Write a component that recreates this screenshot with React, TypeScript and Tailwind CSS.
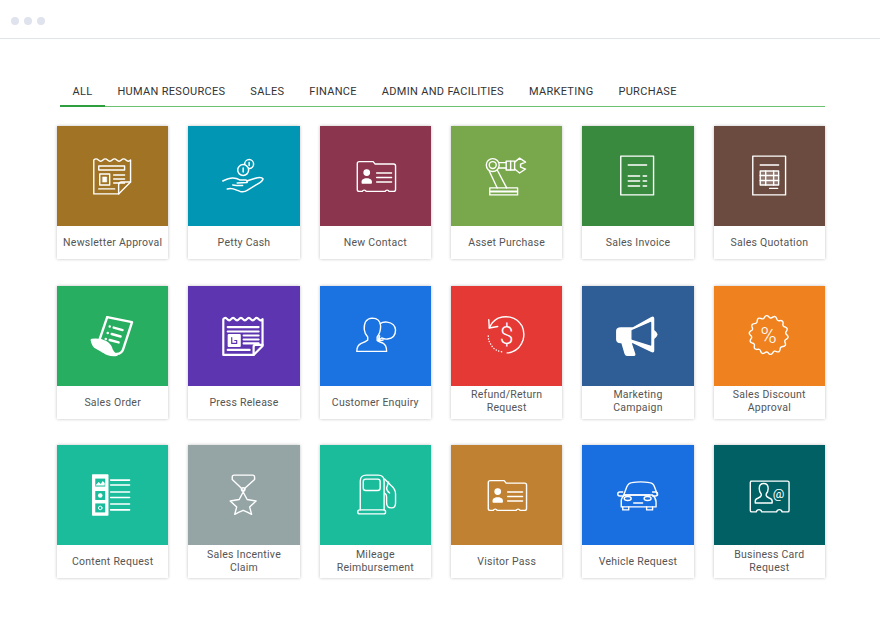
import type { ReactNode } from "react";

const tabs = ["ALL", "HUMAN RESOURCES", "SALES", "FINANCE", "ADMIN AND FACILITIES", "MARKETING", "PURCHASE"];

// zigzag along the top of the newspaper icons
function wave(x1: number, x2: number, y: number, n: number) {
  const step = (x2 - x1) / n;
  let d = `M${x1} ${y}`;
  for (let i = 0; i < n; i++) {
    d += ` q${step / 2} ${i % 2 ? 2.4 : -2.4} ${step} 0`;
  }
  return d;
}

function badgePath(cx: number, cy: number, r: number, n: number) {
  const pt = (a: number, rr: number) => `${(cx + rr * Math.cos(a)).toFixed(1)} ${(cy + rr * Math.sin(a)).toFixed(1)}`;
  let d = `M${pt(0, r)} `;
  for (let i = 0; i < n; i++) {
    const a = (i * 2 * Math.PI) / n;
    const b = ((i + 1) * 2 * Math.PI) / n;
    d += `Q${pt((a + b) / 2, i % 2 ? r - 2.4 : r + 2.4)} ${pt(b, r)} `;
  }
  return d + "Z";
}

function Svg({ children, sw = 1.4 }: { children: ReactNode; sw?: number }) {
  return (
    <svg viewBox="0 0 112 100" className="h-full w-full" fill="none" stroke="white" strokeWidth={sw} strokeLinejoin="round" strokeLinecap="round">
      {children}
    </svg>
  );
}

const Contact = () => (
  <Svg>
    <path d="M37.500 37.500a2 2 0 0 1 2-2h14l2 2.500h18.500a2 2 0 0 1 2 2v23.500a2 2 0 0 1-2 2h-4.500a2.200 2.200 0 0 0-4 0h-19a2.200 2.200 0 0 0-4 0h-3a2 2 0 0 1-2-2z" />
    <circle cx="47" cy="46.500" r="2.700" fill="white" />
    <path d="M42.500 57v-1.500q0-1.500 3-2.500h3q3 1 3 2.500v1.500z" fill="white" />
    <path d="M57 47h15M57 51.500h15M57 56h15" />
  </Svg>
);

const icons: Record<string, () => ReactNode> = {
  newsletter: () => (
    <Svg>
      <path d={`${wave(37, 74, 34, 8)} V56 L62 68 H37 Z`} />
      <path d="M62 68 V59 Q62 56 65 56 H74" />
      <rect x="42" y="40" width="26" height="4" />
      <rect x="43" y="48" width="10" height="11" />
      <rect x="46" y="51" width="4" height="5" fill="white" strokeWidth="0.6" />
      <path d="M57 49h11M57 53h11M57 57h11M42 63h16" />
    </Svg>
  ),
  petty: () => (
    <Svg sw={1.5}>
      <circle cx="61.500" cy="38" r="4.500" />
      <circle cx="55.500" cy="44" r="5.500" fill="#0096b4" />
      <path d="M55.500 42v4M61.500 36.500v3" />
      <path d="M35 55q6-3 10-3 4 0 7 2h6q2.500.5 1.500 2.500l-10 .5M59 55l8-2.500q7-2 8.500 .5-1 3-7 6l-9 5.500q-3 2-7 1l-7-2.500q-3-1-6 0" />
      <path d="M45 59q6 1 10 .5" />
    </Svg>
  ),
  contact: () => <Contact />,
  robot: () => (
    <Svg>
      <circle cx="42" cy="39" r="6.500" />
      <circle cx="42" cy="39" r="3.500" />
      <path d="M48.500 36.500h7M48.500 42h7" />
      <rect x="55.500" y="35" width="8.500" height="9" />
      <path d="M60 35v9" />
      <path d="M64 36l5-4 6 4-5 2v3l5 2-6 4-5-4" />
      <path d="M38.500 45l8 17M46.500 44l9.500 18" />
      <rect x="39" y="62" width="28" height="7" />
      <path d="M40 65.500h26" strokeWidth="2" />
    </Svg>
  ),
  invoice: () => (
    <Svg>
      <rect x="39" y="30" width="33" height="39" />
      <path d="M46.500 39h18.500M46.500 50h11.500M46.500 55h11.500M46.500 60h11.500M61.500 50h3.500M61.500 55h3.500M61.500 60h3.500" />
    </Svg>
  ),
  quotation: () => (
    <Svg>
      <rect x="39" y="30" width="33" height="39" />
      <path d="M46.500 39h18.500M56 62.500h8" />
      <rect x="46.500" y="45" width="18.500" height="14" fill="white" fillOpacity="0.25" />
      <path d="M46.500 49.500h18.500M46.500 54.500h18.500M52 45v14M60 45v14" />
    </Svg>
  ),
  order: () => (
    <Svg sw={2.4}>
      <path d="M50.500 31l25 5-8.500 26q-1.500 6-7 6" />
      <path d="M50.500 31l-8.500 25" />
      <path d="M35 54q8-1 14 2 5 3 6 8 2 4 5 5-8 1-13-3-3-2-7-4-4-2-5-8z" fill="white" />
      <path d="M57 41.500l9 2.500M55 48l9 2.500M53 54l9 2.500" />
      <path d="M53 40.500h.1M51 47h.1M49 53h.1" />
    </Svg>
  ),
  press: () => (
    <Svg sw={2.2}>
      <path d={`${wave(35.500, 75, 33, 10)} V60 L66 69 H35.500 Z`} />
      <path d="M66 69 V61 Q66 59 68 59 H75" />
      <path d="M40 41h31M40 45.500h31" />
      <rect x="41" y="49" width="11" height="11" fill="white" stroke="white" />
      <path d="M44 51.500v6h5v-3h-2" stroke="#5e35b1" strokeWidth="1.200" />
      <path d="M56 49.500h15M56 53.500h15M56 57.500h15M40 64h22" />
    </Svg>
  ),
  enquiry: () => (
    <Svg>
      <path d="M37 65.500q0-6 4.500-8 5-2 6.500-3.500v-3q-3-3-3.500-7.500-.5-11 8-11.500 8 0 8.500 8 0 7-3.500 11v3.500q2 1.500 5.500 2.500 4 2 4 8.500z" />
      <path d="M60.500 37.500q3-2 7-1.500 8 1 8.500 8 0 8-8 9-3 .5-6-1l-2.500 2v-4" />
      <path d="M60 50l-1.500 5 5-1" />
    </Svg>
  ),
  refund: () => (
    <Svg>
      <path d="M38.500 42q3-7 9-10 6-2 12-1 8 2 12 9 3 7 1 14-3 9-11 12-2 1-5 1" />
      <path d="M38 33.500l.5 8.500 8.500-1.500" />
      <path d="M37.500 50q0 5 3 9 2 4 6 5.500 2 1 5 1.500" strokeDasharray="0.2 2.600" />
      <text x="56" y="58" textAnchor="middle" fill="white" stroke="none" fontFamily="Roboto, sans-serif" fontWeight="300" fontSize="25">$</text>
    </Svg>
  ),
  marketing: () => (
    <Svg>
      <path d="M39 42h12l19-10.500q2-1 2 1v32q0 2-2 1l-19-9h-12q-4 0-4-3v-8.500q0-3 4-3z" fill="white" stroke="white" />
      <path d="M50.500 44.500l18.500-8v22.500l-18.500-6z" fill="#2f5d96" stroke="#2f5d96" />
      <path d="M72.500 44.500q3 2 3 4t-3 4" fill="white" strokeWidth="1" />
      <path d="M40 56h9l4 12q.5 1.500-1.500 1.500h-6q-1.500 0-2-1.500z" fill="white" stroke="white" />
    </Svg>
  ),
  discount: () => (
    <Svg>
      <path d={badgePath(55, 49, 18.500, 28)} />
      <text x="55" y="57" textAnchor="middle" fill="white" stroke="none" fontFamily="Roboto, sans-serif" fontWeight="300" fontSize="22">%</text>
    </Svg>
  ),
  content: () => (
    <Svg sw={1.6}>
      <rect x="36" y="30" width="15" height="40" fill="white" stroke="white" />
      <rect x="38.500" y="33.500" width="10" height="8" fill="#1abc9c" stroke="none" />
      <rect x="38.500" y="46" width="10" height="9" fill="#1abc9c" stroke="none" />
      <rect x="38.500" y="58.500" width="10" height="9" fill="#1abc9c" stroke="none" />
      <path d="M39 40l3-3 2 2 2-3 2 2v2.500h-9z" fill="white" stroke="none" />
      <circle cx="43.500" cy="50.500" r="2.300" fill="white" stroke="none" />
      <circle cx="43.500" cy="63" r="1.800" stroke="white" strokeWidth="1" />
      <path d="M54 35h19M54 40h19M54 47h19M54 52.500h19M54 59h19M54 65h19" />
    </Svg>
  ),
  incentive: () => (
    <Svg>
      <path d="M44.500 32q0-2 2-2h18.500q2 0 2 2v2.500l-9 8q-1.500 1.500-1.500 3h-2q0-1.500-1.500-3l-8.500-8z" />
      <circle cx="55.500" cy="44.500" r="1.800" />
      <path d="M55.500 47l4 7.500 9 1.500-6.500 6 2 7.500q-4.500-2.500-8.500-4-4 1.500-8.500 4l2-7.500-6.500-6 9-1.500z" />
    </Svg>
  ),
  fuel: () => (
    <Svg>
      <path d="M40.500 65V36q0-6 6-6h12q6 0 6 6v29" />
      <rect x="43.500" y="34" width="17" height="11.500" rx="2.500" />
      <rect x="38" y="65" width="28" height="4" rx="2" />
      <path d="M65 34l6 6q5 4 5 9v9q0 5-4 5-5 0-5-5v-6q0-3-2-4" />
      <path d="M69 37l-2 6q0 3 3 5" />
    </Svg>
  ),
  visitor: () => <Contact />,
  vehicle: () => (
    <Svg>
      <path d="M42 50l3-8q1.500-4 5-4.500 9-1.500 18 0 4 .5 5 4.500l3 8" />
      <path d="M42 50q-4 3-3.500 7v5h35v-5q0-4-3.500-7z" transform="translate(1 0)" />
      <path d="M42 50h26" />
      <path d="M41 47h-3q-2 0-2 2t2 2h3" />
      <path d="M71 47h3q2 0 2 2t-2 2h-3" />
      <ellipse cx="46" cy="53.500" rx="3.500" ry="2" />
      <ellipse cx="66" cy="53.500" rx="3.500" ry="2" />
      <path d="M52 58h9M41 62v3h6v-3M65 62v3h6v-3" />
    </Svg>
  ),
  card: () => (
    <Svg>
      <path d="M37 36h37q1.500 0 1.500 1.500v28q0 1.500-1.500 1.500h-5.500a2.800 2.800 0 0 0-5.500 0h-15a2.800 2.800 0 0 0-5.500 0h-4.500q-1.500 0-1.500-1.500v-28q0-1.500 1.500-1.500z" />
      <path d="M41.500 58v-2q0-2 3-3 2.500-1 3-2.500v-1.500q-2-2-2-5.500 0-5 4.500-5t4.500 5q0 3.500-2 5.500v1.500q.5 1.500 3 2.500 3 1 3 3v2z" />
      <text x="65" y="53.500" textAnchor="middle" fill="white" stroke="none" fontFamily="Roboto, sans-serif" fontSize="13">@</text>
    </Svg>
  ),
};

const cards = [
  { title: "Newsletter Approval", color: "bg-[#a07424]", icon: "newsletter" },
  { title: "Petty Cash", color: "bg-[#0096b4]", icon: "petty" },
  { title: "New Contact", color: "bg-[#8b354e]", icon: "contact" },
  { title: "Asset Purchase", color: "bg-[#79a84c]", icon: "robot" },
  { title: "Sales Invoice", color: "bg-[#398a3f]", icon: "invoice" },
  { title: "Sales Quotation", color: "bg-[#6b4a3f]", icon: "quotation" },
  { title: "Sales Order", color: "bg-[#27ae60]", icon: "order" },
  { title: "Press Release", color: "bg-[#5e35b1]", icon: "press" },
  { title: "Customer Enquiry", color: "bg-[#1a73e0]", icon: "enquiry" },
  { title: "Refund/Return Request", color: "bg-[#e53935]", icon: "refund", wrapped: true },
  { title: "Marketing Campaign", color: "bg-[#2f5d96]", icon: "marketing", wrapped: true },
  { title: "Sales Discount Approval", color: "bg-[#ef821e]", icon: "discount", wrapped: true },
  { title: "Content Request", color: "bg-[#1abc9c]", icon: "content" },
  { title: "Sales Incentive Claim", color: "bg-[#95a5a6]", icon: "incentive", wrapped: true },
  { title: "Mileage Reimbursement", color: "bg-[#1abc9c]", icon: "fuel", wrapped: true },
  { title: "Visitor Pass", color: "bg-[#c08232]", icon: "visitor" },
  { title: "Vehicle Request", color: "bg-[#1a6fe0]", icon: "vehicle" },
  { title: "Business Card Request", color: "bg-[#006064]", icon: "card", wrapped: true },
];

function App() {
  return (
    <div className="h-[624px] w-[880px] overflow-hidden bg-white font-['Roboto',sans-serif]">
      <div className="flex h-[39px] items-center gap-[5px] border-b border-[#dfe5e7] pl-[11px] pt-[4px]">
        <span className="h-2 w-2 rounded-full bg-[#dfe3ee]" />
        <span className="h-2 w-2 rounded-full bg-[#dfe3ee]" />
        <span className="h-2 w-2 rounded-full bg-[#dfe3ee]" />
      </div>

      <div className="pl-[57px] pr-[55px] pt-[37px]">
        <div className="ml-[3px] flex h-[31px] border-b border-[#6cc070]">
          {tabs.map((tab, i) => (
            <div
              key={tab}
              className={`-mb-px flex items-center border-b-2 px-[12.5px] pt-1 text-[11px] tracking-[0.3px] text-[#333] ${
                i === 0 ? "border-[#2e9e3e]" : "border-transparent"
              }`}
            >
              {tab}
            </div>
          ))}
        </div>

        <div className="mt-[19px] grid grid-cols-6 gap-x-5 gap-y-[26.5px]">
          {cards.map((card) => (
            <div key={card.title} className="h-[133px] overflow-hidden bg-white shadow-[0_0_3px_rgba(0,0,0,0.25)]">
              <div className={`h-[100px] ${card.color}`}>{icons[card.icon]()}</div>
              <div
                className={`flex h-[33px] items-center justify-center px-[5px] text-center text-[10.5px] leading-[13px] tracking-[0.25px] text-[#555] ${
                  card.wrapped ? "pb-[2px]" : ""
                }`}
              >
                {card.title}
              </div>
            </div>
          ))}
        </div>
      </div>
    </div>
  );
}

export default App;
